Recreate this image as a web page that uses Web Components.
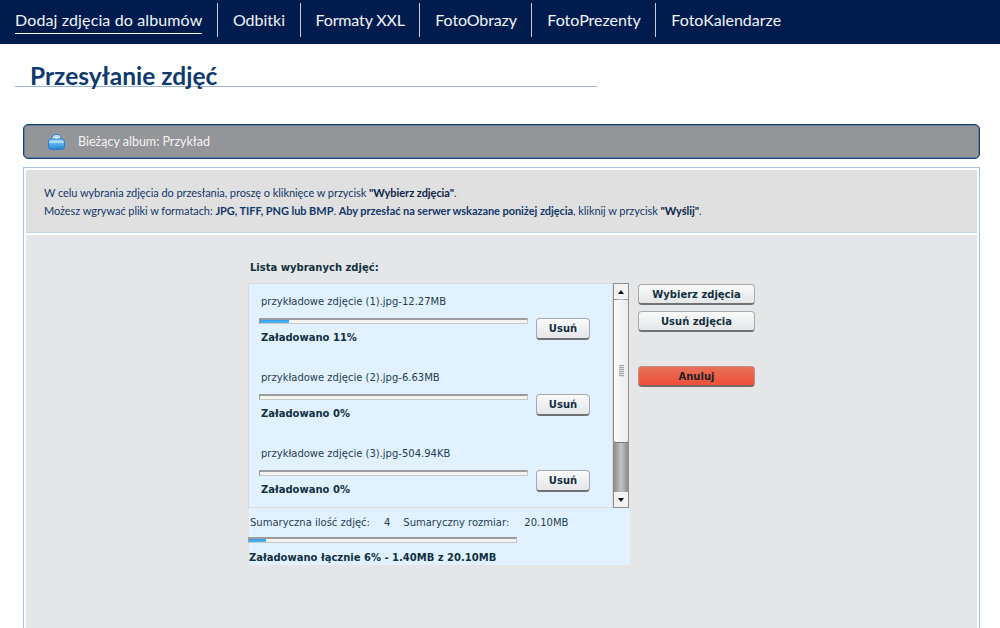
<!DOCTYPE html>
<html lang="pl">
<head>
<meta charset="utf-8">
<title>Przesyłanie zdjęć</title>
<style>
  html, body { margin: 0; height: 628px; overflow: hidden; background: #fff; }
  b.k { color: #0b2448; }
</style>
</head>
<body>
<top-nav>
  <nav-link active style="letter-spacing:.13px">Dodaj zdjęcia do albumów</nav-link>
  <nav-link>Odbitki</nav-link>
  <nav-link style="letter-spacing:-.15px">Formaty XXL</nav-link>
  <nav-link style="letter-spacing:-.12px">FotoObrazy</nav-link>
  <nav-link>FotoPrezenty</nav-link>
  <nav-link last>FotoKalendarze</nav-link>
</top-nav>
<page-title>Przesyłanie zdjęć</page-title>
<album-bar>Bieżący album: Przykład</album-bar>
<upload-panel>
  <span slot="info">W celu wybrania zdjęcia do przesłania, proszę o kliknięce w przycisk <b class="k">"Wybierz zdjęcia"</b>.</span>
  <span slot="info2">Możesz wgrywać pliki w formatach: <b>JPG, TIFF, PNG lub BMP</b>. <b>Aby przesłać na serwer wskazane poniżej zdjęcia</b>, kliknij w przycisk <b class="k">"Wyślij"</b>.</span>
  <photo-list></photo-list>
</upload-panel>

<script>
class TopNav extends HTMLElement {
  connectedCallback() {
    this.attachShadow({ mode: "open" });
    this.shadowRoot.innerHTML = `
      <style>
        :host { display: flex; height: 44px; background: #001c4e; box-sizing: border-box; padding: 3px 0 7px; }
      </style>
      <slot></slot>`;
  }
}
customElements.define("top-nav", TopNav);

class NavLink extends HTMLElement {
  connectedCallback() {
    this.attachShadow({ mode: "open" });
    this.shadowRoot.innerHTML = `
      <style>
        :host { display: block; padding: 0 14.5px 0 15px; border-right: 1px solid #c8ccd4; color: #f2f4f7;
          font: 16px/34px Lato, "Open Sans", sans-serif; white-space: nowrap; height: 34px; }
        :host([last]) { border-right: 0; }
        span { display: inline-block; height: 30px; }
        :host([active]) span { border-bottom: 1px solid #fff; height: 30px; }
      </style>
      <span><slot></slot></span>`;
  }
}
customElements.define("nav-link", NavLink);

class PageTitle extends HTMLElement {
  connectedCallback() {
    this.attachShadow({ mode: "open" });
    this.shadowRoot.innerHTML = `
      <style>
        :host { display: block; width: 567px; margin: 19px 0 0 15px; padding-left: 15px; height: 23px;
          border-bottom: 1px solid #9db4d4; color: #0f3a6e;
          font: bold 24.5px/26px Lato, sans-serif; white-space: nowrap; }
      </style>
      <slot></slot>`;
  }
}
customElements.define("page-title", PageTitle);

class AlbumBar extends HTMLElement {
  connectedCallback() {
    this.attachShadow({ mode: "open" });
    this.shadowRoot.innerHTML = `
      <style>
        :host { display: flex; align-items: center; gap: 13px; box-sizing: border-box; width: 957px; height: 35px;
          margin: 37px 0 0 23px; padding-left: 24px; background: #949599; border: 1px solid #123f75;
          box-shadow: inset 0 0 0 1px rgba(31,79,128,.35); border-radius: 5px; color: #f4f4f4; font: 12.5px Lato, sans-serif; }
        svg { display: block; }
      </style>
      <svg width="17" height="16" viewBox="0 0 17 16">
        <defs><linearGradient id="b" x1="0" y1="0" x2="0" y2="1">
          <stop offset="0" stop-color="#a5d8f8"/><stop offset=".55" stop-color="#4ea8e8"/><stop offset="1" stop-color="#2a80cc"/>
        </linearGradient></defs>
        <path d="M4 6 V3.5 Q4 .8 7 .6 H10 Q13 .8 13 3.5 V6" fill="#cfe8fa" stroke="#2a7cc4"/>
        <path d="M6.5 5 V2.4 H10.5 V5" fill="#fff" stroke="#8fc4e8" stroke-width=".7"/>
        <rect x=".5" y="5" width="16" height="10.5" rx="3" fill="url(#b)" stroke="#2a7cc4"/>
        <path d="M1.2 8 H15.8" stroke="#e4f3fd" stroke-width="1"/>
      </svg>
      <span><slot></slot></span>`;
  }
}
customElements.define("album-bar", AlbumBar);

class UploadPanel extends HTMLElement {
  connectedCallback() {
    this.attachShadow({ mode: "open" });
    this.shadowRoot.innerHTML = `
      <style>
        :host { display: block; box-sizing: border-box; width: 957px; height: 470px; margin: 8px 0 0 23px;
          border: 1px solid #a9c2de; padding: 2px; }
        .info { box-sizing: border-box; padding: 14px 0 0 18px; background: #e0e0e0;
          border-bottom: 1px solid #c5d5e6; color: #12386a; font: 11px/18px Lato, sans-serif; letter-spacing: -.06px;
          height: 63px; white-space: nowrap; }
        .info ::slotted(span) { display: block; }
        .main { margin-top: 2px; height: 400px; background: #e5e6e8; box-sizing: border-box; padding: 27px 0 0 222px; }
      </style>
      <div class="info"><slot name="info"></slot><slot name="info2"></slot></div>
      <div class="main"><slot></slot></div>`;
  }
}
customElements.define("upload-panel", UploadPanel);

class PhotoList extends HTMLElement {
  connectedCallback() {
    const files = [
      ["przykładowe zdjęcie (1).jpg-12.27MB", 11],
      ["przykładowe zdjęcie (2).jpg-6.63MB", 0],
      ["przykładowe zdjęcie (3).jpg-504.94KB", 0],
    ];
    this.attachShadow({ mode: "open" });
    this.shadowRoot.innerHTML = `
      <style>
        :host { display: block; color: #1f3f4f; font: 10px "DejaVu Sans", Verdana, sans-serif; }
        b, .head { color: #12303f; }
        .head { font-weight: bold; line-height: 12px; margin-bottom: 9px; padding-left: 2px; }
        .top { display: flex; align-items: flex-start; }
        .box { box-sizing: border-box; width: 365px; height: 225px; background: #e1f1ff; border: 1px solid #dadada;
          padding-left: 10px; overflow: hidden; }
        .side { display: flex; flex-direction: column; margin: 1px 0 0 9px; }
        .side fx-button { margin-bottom: 6px; height: 21px; }
        .side fx-button[danger] { margin: 28px 0 0; }
        .sum { width: 381px; height: 57px; margin-left: 1px; background: #e1f1ff; box-sizing: border-box; padding-top: 9px; }
        .sum .row { display: flex; padding-left: 1px; line-height: 12px; height: 12px; }
        .sum load-bar { margin: 8px 0 0 -1px; }
        .sum b { display: block; margin-top: 9px; line-height: 12px; }
      </style>
      <div class="head">Lista wybranych zdjęć:</div>
      <div class="top">
        <div class="box">
          ${files.map(f => `<file-row name="${f[0]}" pct="${f[1]}"></file-row>`).join("")}
        </div>
        <fake-scroll></fake-scroll>
        <div class="side">
          <fx-button wide>Wybierz zdjęcia</fx-button>
          <fx-button wide>Usuń zdjęcia</fx-button>
          <fx-button wide danger>Anuluj</fx-button>
        </div>
      </div>
      <div class="sum">
        <div class="row"><span>Sumaryczna ilość zdjęć:</span><span style="margin-left:14px">4</span><span style="margin-left:13px">Sumaryczny rozmiar:</span><span style="margin-left:15px">20.10MB</span></div>
        <load-bar pct="6.5" style="width:269px"></load-bar>
        <b>Załadowano łącznie 6% - 1.40MB z 20.10MB</b>
      </div>`;
  }
}
customElements.define("photo-list", PhotoList);

class FileRow extends HTMLElement {
  connectedCallback() {
    const pct = this.getAttribute("pct");
    this.attachShadow({ mode: "open" });
    this.shadowRoot.innerHTML = `
      <style>
        :host { display: block; height: 76px; box-sizing: border-box; padding-top: 12px; }
        .name { padding-left: 2px; line-height: 12px; height: 12px; }
        .line { display: grid; grid-template-columns: 269px auto; column-gap: 8px; margin-top: 10px; }
        b { display: block; padding-left: 2px; margin-top: 8px; line-height: 12px; color: #12303f; }
      </style>
      <div class="name">${this.getAttribute("name")}</div>
      <div class="line">
        <div>
          <load-bar pct="${pct}"></load-bar>
          <b>Załadowano ${pct}%</b>
        </div>
        <fx-button>Usuń</fx-button>
      </div>`;
  }
}
customElements.define("file-row", FileRow);

class LoadBar extends HTMLElement {
  connectedCallback() {
    this.attachShadow({ mode: "open" });
    this.shadowRoot.innerHTML = `
      <style>
        :host { display: block; box-sizing: border-box; height: 6px; background: #f3f3f0;
          border: 1px solid #c8c8c6; border-top: 2px solid #9a9c9e; border-left-color: #9a9c9e; }
        div { height: 100%; background: linear-gradient(#2fa0ea, #4fb4f2); }
      </style>
      <div style="width:${this.getAttribute("pct")}%"></div>`;
  }
}
customElements.define("load-bar", LoadBar);

class FxButton extends HTMLElement {
  connectedCallback() {
    this.attachShadow({ mode: "open" });
    this.shadowRoot.innerHTML = `
      <style>
        :host { display: flex; align-items: center; justify-content: center; box-sizing: border-box; width: 54px; height: 22px;
          border: 1px solid #a9a9a9; border-bottom: 2px solid #6f7274; border-radius: 4px;
          background: linear-gradient(#fafafa, #e4e6e8); color: #12303f; cursor: pointer;
          font: bold 10px "DejaVu Sans", Verdana, sans-serif; white-space: nowrap; }
        :host([wide]) { width: 117px; }
        :host([danger]) { background: linear-gradient(#e8705a, #ee4f37); border-color: #c98a7c #c98a7c #7a6a66; color: #1f2226; }
      </style>
      <slot></slot>`;
  }
}
customElements.define("fx-button", FxButton);

class FakeScroll extends HTMLElement {
  connectedCallback() {
    this.attachShadow({ mode: "open" });
    this.shadowRoot.innerHTML = `
      <style>
        :host { display: flex; flex-direction: column; box-sizing: border-box; width: 16px; height: 225px;
          background: linear-gradient(90deg, #8c8c8c, #c4c4c4 50%, #8c8c8c); border: 1px solid #8e8e8e; }
        .btn { flex: 0 0 15px; display: flex; align-items: center; justify-content: center; background: #f2f2f2; }
        .thumb { height: 143px; margin-top: 1px; display: flex; align-items: center; justify-content: center; box-sizing: border-box;
          background: linear-gradient(90deg, #fafafa, #ececec); border-bottom: 1px solid #777; border-radius: 0 0 2px 2px; }
        .grip { width: 5px; height: 12px; background: repeating-linear-gradient(#a8a8a8 0 1px, #e0e0e0 1px 2px); }
        .track { flex: 1; }
        i { width: 0; height: 0; border: 3.5px solid transparent; }
        .up { border-top: 0; border-bottom: 4px solid #111; }
        .down { border-bottom: 0; border-top: 4px solid #111; }
      </style>
      <div class="btn"><i class="up"></i></div>
      <div class="thumb"><div class="grip"></div></div>
      <div class="track"></div>
      <div class="btn"><i class="down"></i></div>`;
  }
}
customElements.define("fake-scroll", FakeScroll);
</script>
</body>
</html>
